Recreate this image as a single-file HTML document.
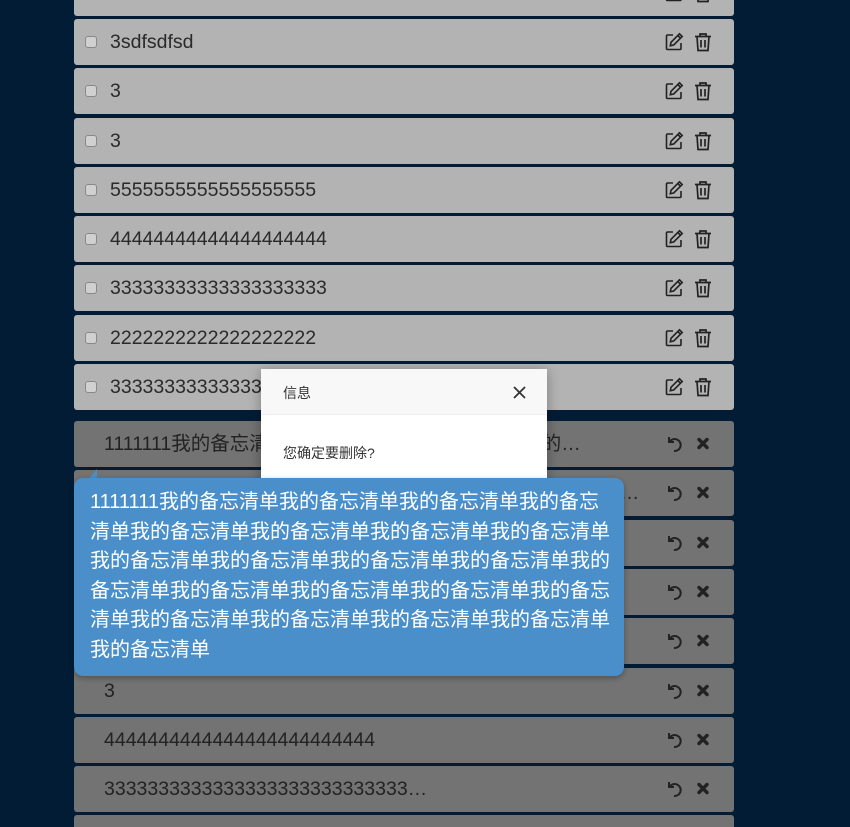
<!DOCTYPE html>
<html><head><meta charset="utf-8">
<style>
*{box-sizing:border-box;margin:0;padding:0}
html,body{width:850px;height:827px;overflow:hidden}
body{background:#031c36;position:relative;font-family:"Liberation Sans","Noto Sans CJK SC",sans-serif}
.row{position:absolute;left:74px;width:660px;height:46px;border-radius:3px;background:#b3b3b3;color:#2a2a2a;font-size:19.5px}
.row .cb{position:absolute;left:11px;top:17px;width:12px;height:12px;border:1px solid #888;border-radius:3px;background:#d0d0d0}
.row .t{position:absolute;left:36px;top:11px;white-space:nowrap;line-height:24px;overflow:hidden;text-overflow:ellipsis}
.row.d{background:#737373}
.row.d .t{left:30px;color:#222}
.ic{position:absolute;top:13px}
</style></head><body>

<div id="rows"></div>

<script>
var up=[[-30,""],[19,"3sdfsdfsd"],[68,"3"],[118,"3"],[167,"5555555555555555555"],[216,"44444444444444444444"],[265,"33333333333333333333"],[315,"2222222222222222222"],[364,"333333333333333333333"]];
var L='1111111'+'我的备忘清单'.repeat(22);
var dn=[[421,L,492],[470,L,548],[520,"",0],[569,"",0],[618,"",0],[668,"3",0],[717,"4444444444444444444444444",0],[766,"3333333333333333333333333333…",0],[815,"",0]];
var edit='<svg class="ic" style="left:590px" width="20" height="20" viewBox="0 0 20 20" fill="none" stroke="#222" stroke-width="1.6"><path d="M9 3H3.5a1 1 0 0 0-1 1v12.5a1 1 0 0 0 1 1H16a1 1 0 0 0 1-1V11"/><path d="M15.5 1.8l2.7 2.7-8.5 8.5-3.4.7.7-3.4z"/><path d="M13.8 3.5l2.7 2.7"/></svg>';
var trash='<svg class="ic" style="left:620px" width="18" height="20" viewBox="0 0 18 20" fill="none" stroke="#222" stroke-width="1.7"><path d="M1 4.5h16M6 4.5V2h6v2.5M3 4.5l1 14h10l1-14M7 8v7.5M11 8v7.5"/></svg>';
var undo='<svg class="ic" style="left:591px;top:14px" width="18" height="18" viewBox="0 0 18 18" fill="none" stroke="#222" stroke-width="2"><path d="M4 2v5h5"/><path d="M4.5 7A6 6 0 1 1 9 16"/></svg>';
var x='<svg class="ic" style="left:623px;top:16px" width="12" height="13" viewBox="0 0 12 13"><path d="M2 2.5l8 8M10 2.5l-8 8" stroke="#222" stroke-width="3.4" stroke-linecap="round"/></svg>';
var h='';
up.forEach(function(r){h+='<div class="row" style="top:'+r[0]+'px"><span class="cb"></span><span class="t">'+r[1]+'</span>'+edit+trash+'</div>';});
dn.forEach(function(r){h+='<div class="row d" style="top:'+r[0]+'px"><span class="t"'+(r[2]?' style="width:'+r[2]+'px"':'')+'>'+r[1]+'</span>'+undo+x+'</div>';});
document.getElementById('rows').innerHTML=h;
</script>

<div style="position:absolute;left:261px;top:369px;width:286px;height:140px;background:#fff;box-shadow:0 2px 12px rgba(0,0,0,.3)">
  <div style="height:46px;background:#f8f8f8;border-bottom:1px solid #eee;position:relative">
    <span style="position:absolute;left:22px;top:14px;font-size:14px;color:#333">信息</span>
    <svg style="position:absolute;left:252px;top:17px" width="13" height="13" viewBox="0 0 13 13"><path d="M1 1l11 11M12 1L1 12" stroke="#333" stroke-width="1.8"/></svg>
  </div>
  <div style="position:absolute;left:22px;top:74px;font-size:14px;color:#333">您确定要删除?</div>
</div>

<svg style="position:absolute;left:84px;top:468px" width="16" height="12"><path d="M4 12L13 1V12Z" fill="#4a8fca"/></svg>
<div id="tip" style="position:absolute;left:74px;top:478px;width:550px;height:198px;background:#4a8fca;border-radius:9px;box-shadow:0 2px 6px rgba(0,0,0,.3);padding:10px 10px 0 16px;color:#fff;font-size:20px;line-height:29.6px;word-break:break-all"></div>
<script>
document.getElementById('tip').textContent='1111111'+'我的备忘清单'.repeat(22);
</script>
</body></html>
